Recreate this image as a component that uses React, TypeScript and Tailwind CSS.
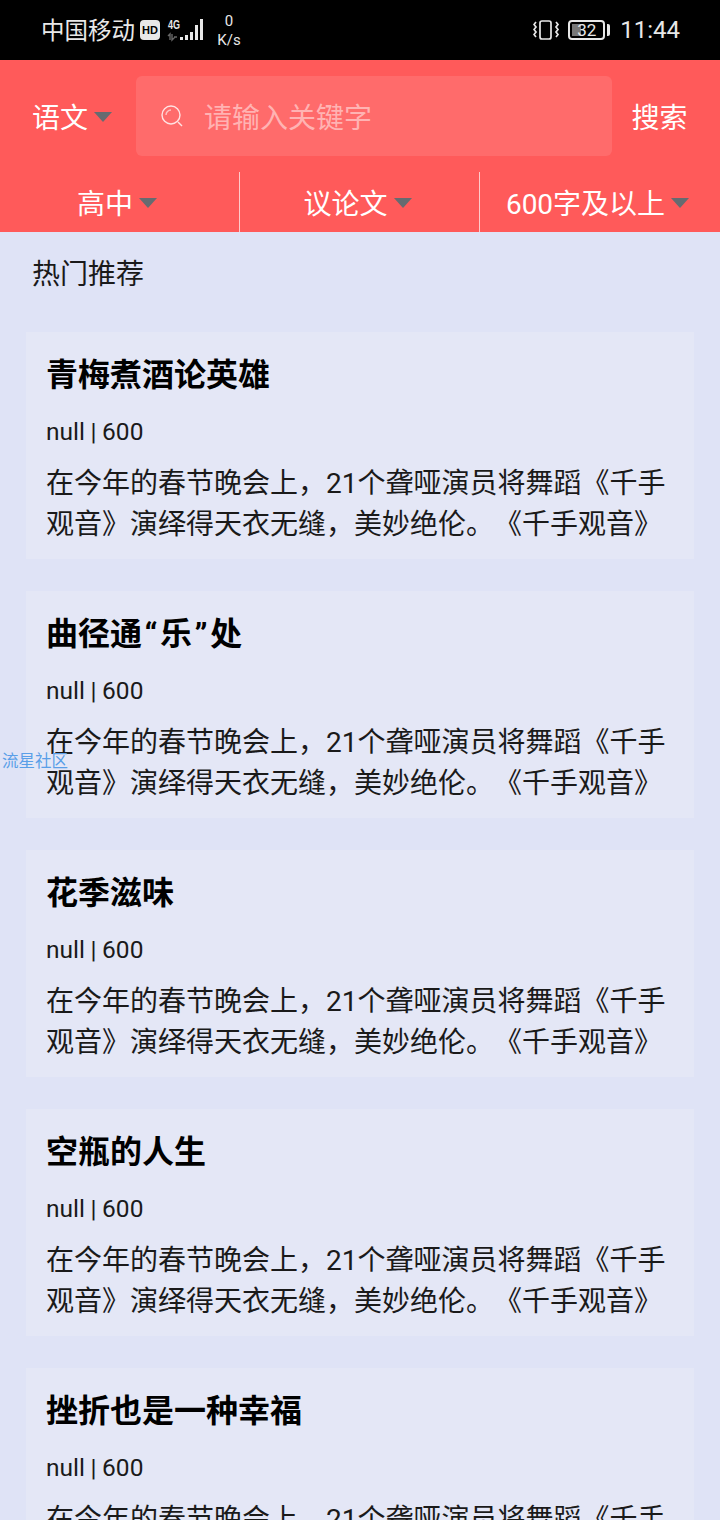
import React from 'react';

const cjk = { fontFamily: 'Roboto, "Noto Sans CJK SC", sans-serif' };

const titles: React.ReactNode[] = [
  '青梅煮酒论英雄',
  <>
    曲径通<span className="px-[2.5px]">“</span>乐<span className="px-[2.5px]">”</span>处
  </>,
  '花季滋味',
  '空瓶的人生',
  '挫折也是一种幸福',
];

const Caret = () => (
  <span className="ml-[6px] mt-[2px] inline-block h-0 w-0 border-x-[9px] border-t-[10px] border-x-transparent border-t-[#666b70]" />
);

const StatusBar = () => (
  <div className="flex h-[60px] items-center bg-black pl-[41px] pr-[40px] text-[#e8e8e8]">
    <span className="pt-1 text-[23.5px] leading-none">中国移动</span>
    <span className="ml-[5px] flex h-[20px] w-[20px] items-center justify-center rounded-[4px] bg-[#e8e8e8] text-[11px] font-bold text-black" style={{ fontFamily: '"Liberation Sans", sans-serif' }}>
      HD
    </span>
    <svg className="ml-[6px]" width="40" height="26" viewBox="0 0 40 26">
      <text x="2" y="12" fontSize="12" fontWeight="700" fill="#e8e8e8" fontFamily="Liberation Sans" textLength="12" lengthAdjust="spacingAndGlyphs">4G</text>
      <path d="M4 23v-6l-2 2M6 17v6l3-3M8 20h3" fill="none" stroke="#666" strokeWidth="1.4" />
      <rect x="14" y="20" width="3" height="3" fill="#e8e8e8" />
      <rect x="19" y="18" width="3" height="5" fill="#e8e8e8" />
      <rect x="24" y="15" width="3" height="8" fill="#e8e8e8" />
      <rect x="29" y="8" width="3" height="15" fill="#e8e8e8" />
      <rect x="34" y="2" width="3" height="21" fill="#e8e8e8" />
    </svg>
    <div className="ml-[10px] flex w-[26px] flex-col items-center pt-[2px] text-[15px] leading-[19px]">
      <span>0</span>
      <span>K/s</span>
    </div>
    <svg className="ml-auto" width="28" height="24" viewBox="0 0 28 24" fill="none" stroke="#e8e8e8" strokeWidth="1.7">
      <rect x="7" y="3" width="11" height="18" rx="2" />
      <path d="M3 4l-2 2.5 2 2.5-2 2.5 2 2.5-2 2.5 2 2.5" />
      <path d="M23 4l2 2.5-2 2.5 2 2.5-2 2.5 2 2.5-2 2.5" />
    </svg>
    <div className="relative ml-[7px] h-[20px] w-[37px] overflow-hidden rounded-[4px] border-2 border-[#e8e8e8]">
      <div className="ml-[2px] mt-[2px] h-[12px] w-[9px] bg-[#777]" />
      <span className="absolute inset-0 flex items-center justify-center text-[17px] leading-none">32</span>
    </div>
    <div className="ml-[2px] h-[12px] w-[3px] rounded-r-[2px] bg-[#e8e8e8]" />
    <span className="ml-[10px] text-[24px] leading-none">11:44</span>
  </div>
);

const Header = () => (
  <div className="bg-[#ff5a5a] text-white">
    <div className="flex h-[112px] items-start pt-4">
      <div className="flex h-20 w-[136px] items-center justify-center pl-2 text-[28px] leading-none">
        <span className="pt-[6px]">语文</span>
        <Caret />
      </div>
      <div className="flex h-20 w-[476px] items-center rounded-[6px] bg-[#ff6b6b] pl-[24px]">
        <svg width="24" height="24" viewBox="0 0 24 24" fill="none" stroke="#ffe3e3" strokeWidth="1.4">
          <circle cx="11" cy="11" r="9" />
          <path d="M18 18l4 4" />
          <path d="M6 11a5 5 0 0 1 5-5" stroke="#ffc4c4" />
        </svg>
        <span className="ml-[20px] pt-[6px] text-[28px] leading-none text-[#ffb3b3]">请输入关键字</span>
      </div>
      <div className="flex h-20 flex-1 items-center justify-center pr-[13px] pt-[6px] text-[28px] leading-none">搜索</div>
    </div>
    <div className="flex h-[60px] text-[28px] leading-none">
      <div className="flex w-[240px] items-center justify-center border-r border-[#ffc9c9] pr-[5px]">
        <span className="pt-[6px]">高中</span>
        <Caret />
      </div>
      <div className="flex w-[240px] items-center justify-center border-r border-[#ffc9c9] pr-1">
        <span className="pt-[6px]">议论文</span>
        <Caret />
      </div>
      <div className="flex flex-1 items-center justify-center pr-[5px]">
        <span className="pt-[6px]">600字及以上</span>
        <Caret />
      </div>
    </div>
  </div>
);

const Card = ({ title }: { title: React.ReactNode }) => (
  <div className="h-[227px] shrink-0 bg-[#e4e7f6] pl-5 pr-5 pt-[21px] text-black">
    <div className="text-[32px] font-bold leading-[44px]">{title}</div>
    <div className="mt-[17px] text-[24.5px] leading-[36px] text-[#1a1a1a] [word-spacing:-0.5px]">null | 600</div>
    <div className="mt-[13px] text-[28px] leading-[41px] text-[#1a1a1a] [text-spacing-trim:space-all]">
      <div className="whitespace-nowrap">在今年的春节晚会上，21个聋哑演员将舞蹈《千手</div>
      <div className="whitespace-nowrap">观音》演绎得天衣无缝，美妙绝伦。《千手观音》</div>
    </div>
  </div>
);

export default function App() {
  return (
    <div className="relative h-[1520px] w-[720px] overflow-hidden bg-[#dfe3f6]" style={cjk}>
      <StatusBar />
      <Header />
      <div className="pl-8 pt-[23px] text-[28px] leading-10 text-[#1a1a1a]">热门推荐</div>
      <div className="flex flex-col gap-8 px-[26px] pt-[37px]">
        {titles.map((t, i) => (
          <Card key={i} title={t} />
        ))}
      </div>
      <div className="absolute left-[2px] top-[751px] text-[16.5px] leading-[22px] text-[#5a9fe8]">流星社区</div>
    </div>
  );
}
